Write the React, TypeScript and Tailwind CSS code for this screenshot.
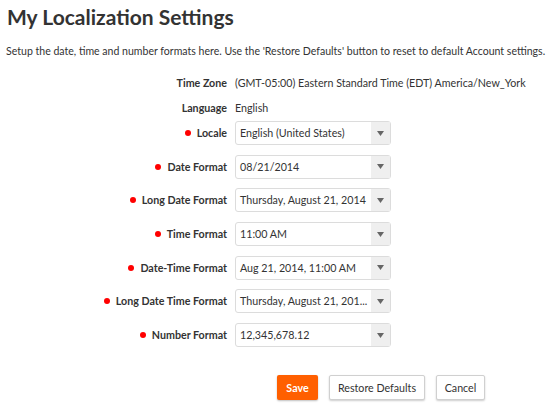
import React from "react";

const rows: { label: string; value: string }[] = [
  { label: "Locale", value: "English (United States)" },
  { label: "Date Format", value: "08/21/2014" },
  { label: "Long Date Format", value: "Thursday, August 21, 2014" },
  { label: "Time Format", value: "11:00 AM" },
  { label: "Date-Time Format", value: "Aug 21, 2014, 11:00 AM" },
  { label: "Long Date Time Format", value: "Thursday, August 21, 201..." },
  { label: "Number Format", value: "12,345,678.12" },
];

function Select({ value }: { value: string }) {
  return (
    <div className="flex h-[24px] w-[156px] items-stretch rounded-[3px] border border-[#dcdcdc] bg-white">
      <div className="flex flex-1 items-center overflow-hidden whitespace-nowrap pl-[4px] text-[10.7px] text-[#333]">
        {value}
      </div>
      <div className="flex w-[19px] items-center justify-center bg-[#efefef]">
        <svg width="7" height="5" viewBox="0 0 7 5">
          <polygon points="0,0 7,0 3.5,5" fill="#666" />
        </svg>
      </div>
    </div>
  );
}

export default function App() {
  return (
    <div
      className="h-[407px] w-[550px] overflow-hidden bg-white text-[#333]"
      style={{ fontFamily: "Lato, 'Open Sans', sans-serif" }}
    >
      <h1 className="pl-[7px] pt-[3px] text-[21px] font-bold leading-[28px] text-[#333]">
        My Localization Settings
      </h1>
      <p className="whitespace-nowrap pl-[6px] pt-[12px] text-[10.55px] leading-[16px] text-[#333]">
        Setup the date, time and number formats here. Use the 'Restore Defaults' button to reset to default Account settings.
      </p>
      <div className="mt-[16px] flex flex-col">
        <div className="flex h-[16px] items-center whitespace-nowrap">
          <div className="w-[227px] shrink-0 text-right text-[10.7px] font-bold">Time Zone</div>
          <div className="pl-[8px] text-[10.7px]">(GMT-05:00) Eastern Standard Time (EDT) America/New_York</div>
        </div>
        <div className="mt-[9px] flex h-[16px] items-center whitespace-nowrap">
          <div className="w-[227px] shrink-0 text-right text-[10.7px] font-bold">Language</div>
          <div className="pl-[8px] text-[10.7px]">English</div>
        </div>
        <div className="mt-[5px] flex flex-col gap-[9.7px]">
          {rows.map((r) => (
            <div key={r.label} className="flex items-center whitespace-nowrap">
              <div className="flex w-[227px] shrink-0 items-center justify-end gap-[6px] text-[10.7px] font-bold">
                <span className="h-[6px] w-[6px] rounded-full bg-[#f00]" />
                <span>{r.label}</span>
              </div>
              <div className="pl-[8px]">
                <Select value={r.value} />
              </div>
            </div>
          ))}
        </div>
      </div>
      <div className="mt-[28px] flex gap-[11px] pl-[277px]">
        <button className="h-[25px] w-[41px] rounded-[2px] bg-[#ff5f00] text-[10.7px] font-bold text-white shadow-[0_1px_2px_rgba(0,0,0,0.25)]">
          Save
        </button>
        <button className="h-[25px] w-[96px] rounded-[2px] border border-[#d0d0d0] bg-white text-[10.7px] text-[#333] shadow-[0_1px_2px_rgba(0,0,0,0.2)]">
          Restore Defaults
        </button>
        <button className="h-[25px] w-[49px] rounded-[2px] border border-[#d0d0d0] bg-white text-[10.7px] text-[#333] shadow-[0_1px_2px_rgba(0,0,0,0.2)]">
          Cancel
        </button>
      </div>
    </div>
  );
}
